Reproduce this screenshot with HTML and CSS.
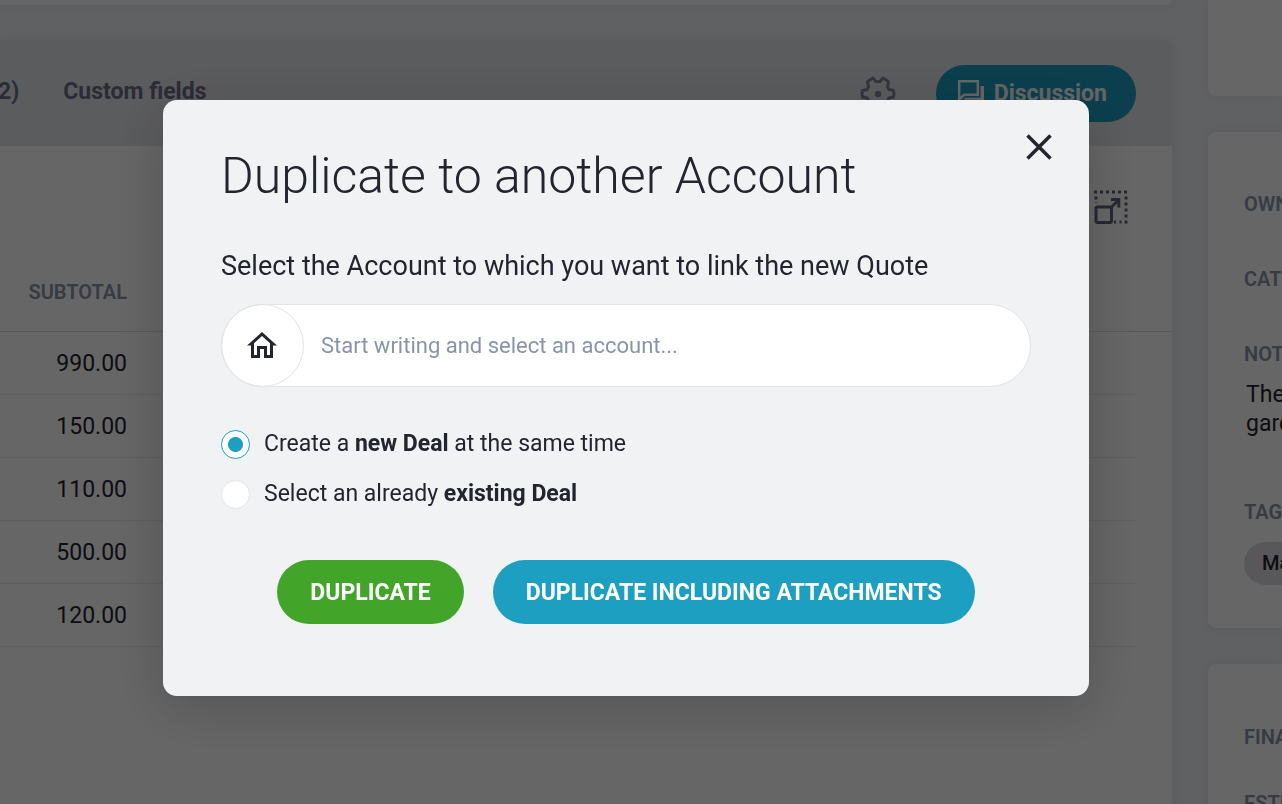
FILE: index.html
```html
<!DOCTYPE html>
<html lang="en">
<head>
<meta charset="utf-8">
<title>Duplicate to another Account</title>
<link rel="stylesheet" href="styles.css">
</head>
<body>
<div class="page">
  <main class="main">
    <section class="card card-top"></section>
    <section class="card detail">
      <header class="tabs">
        <a class="tab" href="#files">(2)</a>
        <a class="tab" href="#custom">Custom fields</a>
        <button class="icon-button settings" aria-label="Settings">
          <svg width="36" height="36" viewBox="0 0 36 36" fill="none" stroke="currentColor" stroke-width="3" stroke-linejoin="round"><path d="M9 5.500L13 3 16 6.500H20L23 3 27 5.500 28.500 7 27.500 12 29 14.500 33.500 15.500 34 19 33.500 22 29 23 27.500 25.500 28.500 30 23 33 20 30H16L13 33 7.500 30 8.500 25.500 7 23 2.500 22 2 19 2.500 15.500 7 14.500 8.500 12 7.500 7Z"/><circle cx="18" cy="19" r="3.200" fill="currentColor" stroke="none"/></svg>
        </button>
        <button class="discussion">
          <svg width="28" height="28" viewBox="0 0 28 28" fill="none" stroke="currentColor" stroke-width="2.500"><path d="M2.200 2.200H20.800V15.800H7L2.200 20.500Z"/><path d="M27 7V27L20.500 20.800H7.500V18.800H23.500V7Z" fill="currentColor" stroke="none"/></svg>
          Discussion
        </button>
      </header>
      <div class="toolbar">
        <button class="icon-button" aria-label="Expand">
          <svg width="36" height="36" viewBox="0 0 36 36" fill="none" stroke="currentColor" stroke-width="3"><path d="M1 3H35" stroke-dasharray="3 3"/><path d="M33 7.500V35M3 7.500V14" stroke-dasharray="3 3"/><path d="M21 33H32" stroke-dasharray="2 3.500"/><rect x="3" y="18" width="15.500" height="15.500" rx="1.500"/><path d="M18.500 18L25.500 11M18 10.500H25.800V18.500"/></svg>
        </button>
      </div>
      <table class="lines">
        <thead><tr><th>SUBTOTAL</th><th class="rest"></th><th class="edge"></th></tr></thead>
        <tbody>
          <tr><td>990.00</td><td></td></tr>
          <tr><td>150.00</td><td></td></tr>
          <tr><td>110.00</td><td></td></tr>
          <tr><td>500.00</td><td></td></tr>
          <tr><td>120.00</td><td></td></tr>
        </tbody>
      </table>
    </section>
  </main>
  <aside class="side">
    <section class="card side-top"></section>
    <section class="card info">
      <h2>OWNER</h2>
      <h2>CATEGORY</h2>
      <h2 class="notes-title">NOTES</h2>
      <p class="notes">The<br>garden</p>
      <h2 class="tags-title">TAGS</h2>
      <span class="tag">Main</span>
    </section>
    <section class="card finance">
      <h2>FINAL PRICE</h2>
      <h2>ESTIMATE</h2>
    </section>
  </aside>
</div>

<div class="overlay">
  <form class="modal" role="dialog" aria-modal="true" aria-labelledby="title">
    <header class="modal-header">
      <h1 id="title">Duplicate to another Account</h1>
      <button type="button" class="close" aria-label="Close">
        <svg width="26" height="26" viewBox="0 0 26 26" fill="none" stroke="currentColor" stroke-width="3.500"><path d="M1.500 1.500L24.500 24.500M24.500 1.500L1.500 24.500"/></svg>
      </button>
    </header>
    <label class="prompt" for="account">Select the Account to which you want to link the new Quote</label>
    <div class="field">
      <span class="field-icon">
        <svg width="30" height="28" viewBox="0 0 30 28"><path fill="currentColor" fill-rule="evenodd" d="M15 0L0 13.500H4V26H13V17H17V26H26V13.500H30ZM15 4L23 11.200V23H20V14H10V23H7V11.200Z"/></svg>
      </span>
      <input id="account" class="field-input" type="text" placeholder="Start writing and select an account...">
    </div>
    <div class="options">
      <label class="option"><input type="radio" name="deal" checked><span>Create a <b>new Deal</b> at the same time</span></label>
      <label class="option"><input type="radio" name="deal"><span>Select an already <b>existing Deal</b></span></label>
    </div>
    <div class="actions">
      <button type="button" class="action green">DUPLICATE</button>
      <button type="button" class="action blue">DUPLICATE INCLUDING ATTACHMENTS</button>
    </div>
  </form>
</div>
</body>
</html>
```

FILE: styles.css
```css
* { box-sizing: border-box; }

html, body { height: 100%; }

body {
  margin: 0;
  overflow: hidden;
  background: #f0f2f5;
  color: #23252e;
  font-family: Roboto, "Liberation Sans", sans-serif;
  font-size: 23px;
}

h1, h2, p { margin: 0; }

button { border: 0; font: inherit; cursor: pointer; }

svg { display: block; flex: none; }

.page {
  display: grid;
  grid-template-columns: 1fr 74px;
  gap: 36px;
  height: 100%;
}

.main, .side {
  display: flex;
  flex-direction: column;
  gap: 36px;
  min-width: 0;
}

.main { gap: 35px; }

.card {
  flex: none;
  background: #fff;
  box-shadow: 0 0 8px rgba(40, 50, 40, 0.08);
}

.card-top { height: 5px; border-radius: 0 0 8px 0; }

.detail { flex: 1; border-radius: 0 8px 0 0; overflow: hidden; }

.tabs {
  display: flex;
  align-items: center;
  gap: 44px;
  height: 106px;
  padding-right: 36px;
  background: #e4e6ea;
}

.tab {
  color: #6c6e88;
  font-weight: 700;
  line-height: 28px;
  text-decoration: none;
  padding-bottom: 2px;
}

.tab:first-child { margin-left: -10px; }

.icon-button { padding: 0; background: none; color: #61667a; }

.settings { margin-left: auto; color: #81889c; }

.discussion {
  display: flex;
  align-items: center;
  gap: 9px;
  height: 57px;
  margin-left: -4px;
  padding: 0 29px 0 21px;
  border-radius: 29px;
  background: #1d9fc2;
  color: #fff;
  font-weight: 700;
}

.toolbar {
  display: flex;
  justify-content: flex-end;
  padding: 43px 43px 0 0;
  height: 106px;
}

.toolbar .icon-button { height: 36px; }

.lines { width: 100%; border-collapse: collapse; table-layout: fixed; }

.lines th {
  width: 127px;
  height: 79px;
  padding: 2px 0 0;
  border-bottom: 1px solid #dcdde2;
  color: #8a94a9;
  font-size: 20px;
  font-weight: 600;
  text-align: right;
}

.lines .rest { width: auto; }

.lines .edge { width: 36px; }

.lines td {
  height: 63px;
  padding: 2px 0 0;
  border-bottom: 1px solid #eceded;
  text-align: right;
}

.side .card { border-radius: 8px 0 0 8px; overflow: hidden; white-space: nowrap; }

.side .side-top { height: 96px; border-radius: 0 0 0 8px; }

.side h2 {
  color: #8a94a9;
  font-size: 20px;
  font-weight: 600;
  line-height: 24px;
}

.info { padding: 60px 0 0 36px; height: 496px; }

.info h2 { margin-bottom: 51px; }

.info .notes-title { margin-bottom: 14px; }

.notes { height: 120px; padding-left: 2px; line-height: 29px; }

.info .tags-title { margin-bottom: 18px; }

.tag {
  display: block;
  width: 90px;
  height: 43px;
  padding: 0 18px;
  border-radius: 22px;
  background: #dcdde2;
  font-size: 20px;
  font-weight: 500;
  line-height: 43px;
}

.side .finance { flex: 1; min-height: 0; padding: 61px 0 0 36px; }

.finance h2 { margin-bottom: 42px; }

.overlay {
  position: fixed;
  inset: 0;
  display: flex;
  align-items: flex-start;
  justify-content: center;
  padding: 100px 30px 0 0;
  background: rgba(0, 0, 0, 0.6);
}

.modal {
  width: 926px;
  padding: 34px 58px 72px;
  border-radius: 14px;
  background: #f0f2f4;
  box-shadow: 0 10px 56px rgba(0, 0, 0, 0.2);
}

.modal-header {
  display: flex;
  justify-content: space-between;
  margin-right: -21px;
}

h1 {
  font-size: 50px;
  font-weight: 300;
  line-height: 84px;
}

.close { align-self: flex-start; padding: 0; background: none; color: #23252e; }

.prompt {
  display: block;
  margin-top: 30px;
  font-size: 27px;
  line-height: 36px;
}

.field {
  display: flex;
  height: 83px;
  margin-top: 20px;
  border: 1px solid #e1e3e9;
  border-radius: 42px;
  background: #fff;
}

.field-icon {
  display: flex;
  align-items: center;
  justify-content: center;
  width: 83px;
  margin: -1px 0 -1px -1px;
  padding-right: 2px;
  border: 1px solid #e1e3e9;
  border-radius: 50%;
}

.field-input {
  flex: 1;
  min-width: 0;
  padding: 0 30px 0 17px;
  border: 0;
  outline: 0;
  background: none;
  color: inherit;
  font: inherit;
  font-size: 22px;
}

.field-input::placeholder { color: #8a94a9; opacity: 1; }

.options { display: grid; gap: 18px; margin-top: 41px; }

.option {
  display: flex;
  align-items: center;
  gap: 14px;
  line-height: 32px;
}

.option b { font-weight: 700; }

.option input {
  appearance: none;
  width: 29px;
  height: 29px;
  margin: 0;
  border: 1px solid #e4e5ec;
  border-radius: 50%;
  background: #fff;
}

.option input:checked {
  border-color: #1d9fc2;
  background: radial-gradient(circle, #1d9fc2 7px, #fff 8px);
}

.actions {
  display: flex;
  justify-content: center;
  gap: 29px;
  margin-top: 50px;
}

.action {
  height: 64px;
  padding: 0 33px;
  border-radius: 32px;
  color: #fff;
  font-weight: 700;
}

.green { background: #42a529; }

.blue { background: #1d9fc2; }
```
